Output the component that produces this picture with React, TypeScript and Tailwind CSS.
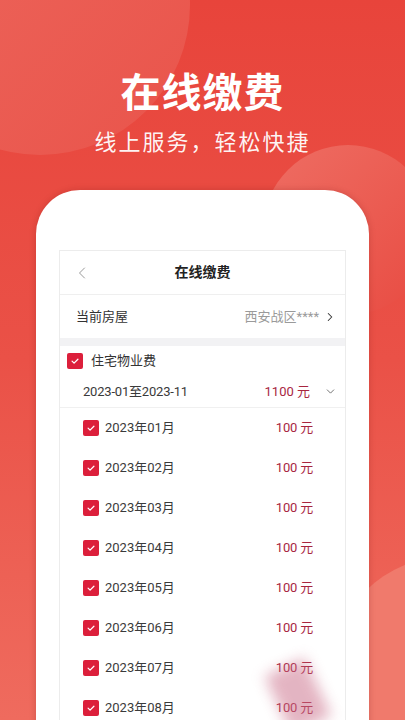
import { ChevronLeft, ChevronRight, ChevronDown } from 'lucide-react';

const months = ['01', '02', '03', '04', '05', '06', '07', '08'];

// Red checked box
function CheckBox() {
    return (
        <span className="flex items-center justify-center w-[16px] h-[16px] rounded-[2px] bg-[#dc1f3b] shrink-0">
            <svg className="w-[10px] h-[10px]" viewBox="0 0 12 12" fill="none">
                <path d="M2.5 6.2l2.4 2.3 4.6-4.6" stroke="#fff" strokeWidth={1.5} strokeLinecap="round" strokeLinejoin="round" />
            </svg>
        </span>
    );
}

function MonthRow({ month }: { month: string }) {
    return (
        <div className="flex items-center h-[40px] pl-[23px] pr-[32px]">
            <CheckBox />
            <span className="ml-[6px] text-[13px] text-[#3a3a3a]">2023年{month}月</span>
            <span className="ml-auto text-[13px] tracking-[-0.2px] text-[#a8263f]">100 元</span>
        </div>
    );
}

export default function App() {
    return (
        <div
            className="relative w-[405px] h-[720px] overflow-hidden bg-gradient-to-b from-[#e8443b] via-[#ea5147] to-[#ef6b5e]"
            style={{ fontFamily: 'Roboto, "Noto Sans CJK SC", "Noto Sans", sans-serif' }}
        >
            {/* background circles */}
            <div className="absolute -left-[110px] -top-[145px] w-[300px] h-[300px] rounded-full bg-gradient-to-br from-[#ee6b61] to-[#e9554c] opacity-90" />
            <div className="absolute left-[263px] top-[145px] w-[170px] h-[170px] rounded-full bg-gradient-to-tl from-[#e84a41] to-[#ee6d63]" />
            <div className="absolute left-[330px] top-[556px] w-[240px] h-[240px] rounded-full bg-[#f07a6c]" />

            <div className="relative flex flex-col items-center">
                <h1 className="mt-[65px] text-[40px] leading-[50px] font-bold tracking-[1px] text-white" style={{ fontFamily: '"Noto Sans CJK SC", sans-serif' }}>在线缴费</h1>
                <p className="mt-[9px] text-[22px] leading-[32px] tracking-[2px] text-white/95" style={{ fontFamily: '"Noto Sans CJK SC", sans-serif' }}>线上服务，轻松快捷</p>

                {/* phone frame */}
                <div className="mt-[34px] w-[333px] h-[540px] bg-white rounded-t-[44px] pt-[60px] px-[23px] shadow-[0_0_6px_rgba(120,20,20,0.25)]">
                    <div className="h-full border border-[#ececec] border-b-0">
                        {/* header */}
                        <div className="relative flex items-center justify-center h-[44px] border-b border-[#efefef]">
                            <ChevronLeft className="absolute left-[12px] w-[20px] h-[20px] text-[#9a9a9a]" strokeWidth={1.2} />
                            <span className="text-[14px] font-bold text-[#222]">在线缴费</span>
                        </div>

                        {/* current house */}
                        <div className="flex items-center h-[43px] pl-[16px] pr-[8px]">
                            <span className="text-[13px] text-[#333]">当前房屋</span>
                            <span className="ml-auto text-[13px] text-[#9a9a9a]">西安战区****</span>
                            <ChevronRight className="ml-[4px] w-[14px] h-[14px] text-[#333]" strokeWidth={1.8} />
                        </div>
                        <div className="h-[8px] bg-[#f2f2f4]" />

                        {/* fee type */}
                        <div className="flex items-center h-[30px] pl-[7px]">
                            <CheckBox />
                            <span className="ml-[8px] text-[13px] text-[#333]">住宅物业费</span>
                        </div>
                        <div className="flex items-center h-[32px] pl-[23px] pr-[8px] border-b border-[#f0f0f0]">
                            <span className="text-[13px] tracking-[-0.2px] text-[#3a3a3a]">2023-01至2023-11</span>
                            <span className="ml-auto text-[13px] text-[#a8263f]">1100 元</span>
                            <ChevronDown className="ml-[14px] w-[13px] h-[13px] text-[#555]" strokeWidth={1.5} />
                        </div>

                        {months.map(m => (
                            <MonthRow key={m} month={m} />
                        ))}
                    </div>
                </div>
            </div>

            {/* blurred watermark */}
            <div className="absolute left-[276px] top-[664px] w-[44px] h-[64px] bg-[#c96b86] opacity-50 blur-[7px] rotate-[-25deg]" />
        </div>
    );
}
